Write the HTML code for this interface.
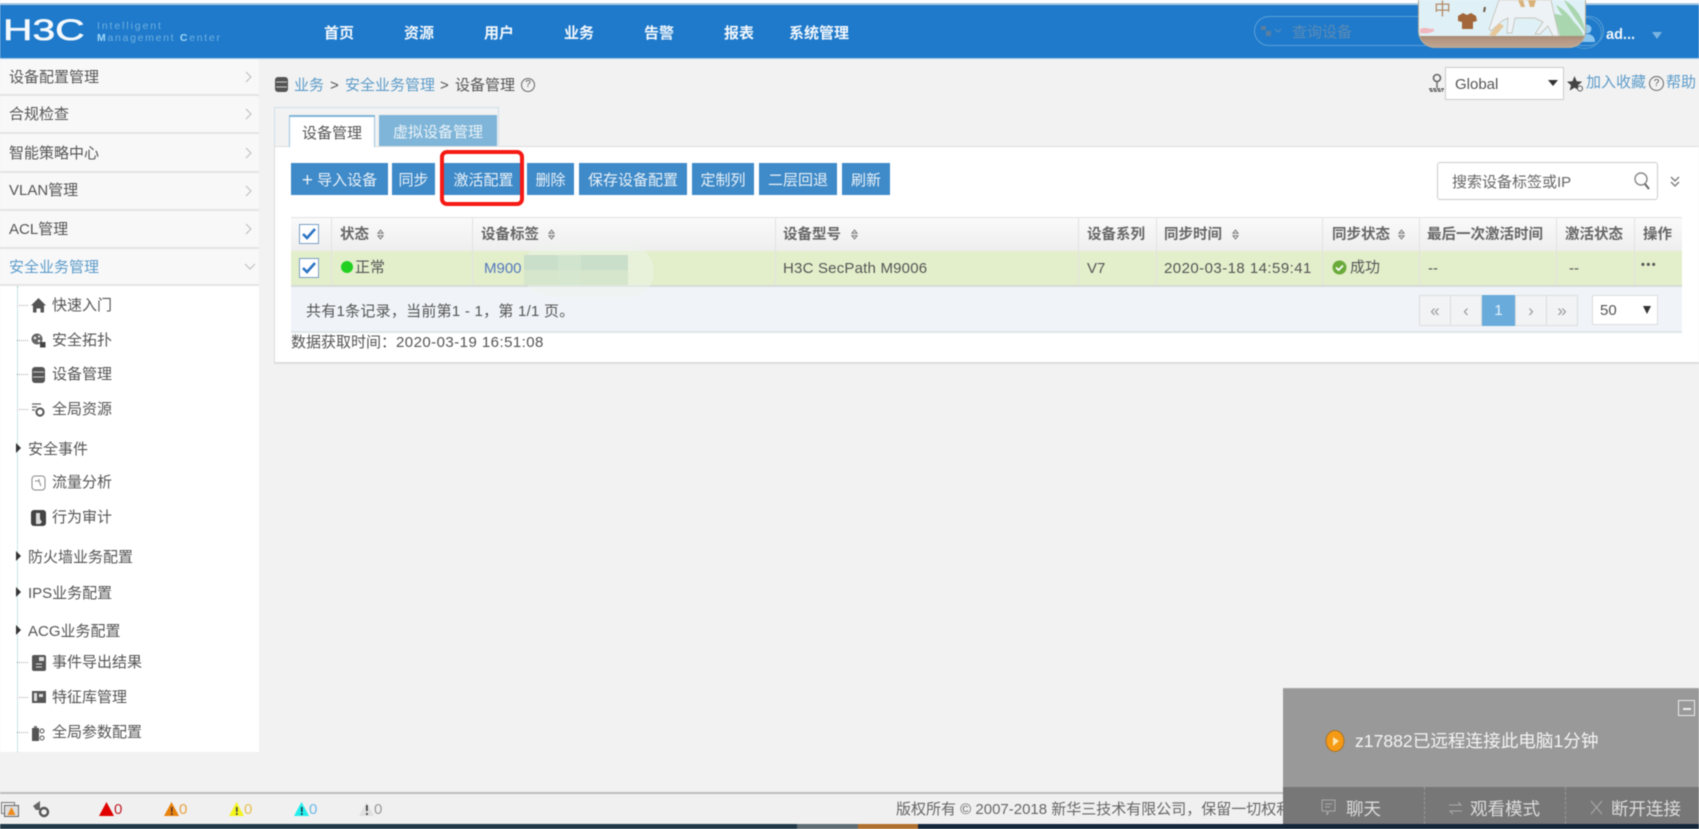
<!DOCTYPE html>
<html lang="zh"><head><meta charset="utf-8"><title>设备管理</title>
<style>
html,body{margin:0;padding:0;width:1699px;height:829px;overflow:hidden;background:#f2f2f2}
#p{position:relative;width:1699px;height:829px;overflow:hidden;font-family:"Liberation Sans","Noto Sans CJK SC",sans-serif;font-size:15px;color:#555;filter:blur(.5px);background:#f2f2f2}
#p div,#p svg{position:absolute}
.t{position:absolute;white-space:nowrap;line-height:20px;height:20px;transform:translateY(1px)}
.n{color:#f2f7fc;font-weight:bold;font-size:15px;top:23px}
.m{left:0;width:259px;background:#f8f8f9;border-bottom:2px solid #e4e4e4;box-sizing:border-box}
.a{color:#5d9cc9}
.b{background:#3f8ac8;color:#e8f1f8;top:163px;height:32px;line-height:35px;text-align:center;position:absolute;white-space:nowrap;font-size:15px}
.h{top:224px;font-weight:bold;color:#666;font-size:14.5px}
.r{top:258px;color:#555}
.pg{top:295px;height:29px;line-height:29px;background:#f1f3f5;border:1px solid #ddd;text-align:center;color:#999;box-sizing:content-box;font-size:17px}
.d{left:17px;width:11px;border-top:1px dotted #aaa;height:0}
.x{width:0;height:0;border-left:5px solid #333;border-top:5px solid transparent;border-bottom:5px solid transparent;left:16px}
.v{top:217px;height:68px;width:1px;background:#e2e2e2}
</style></head><body><div id="p">

<!-- top -->
<div style="left:0;top:0;width:1699px;height:3px;background:#fff"></div>
<div style="left:0;top:3px;width:1699px;height:2px;background:#a9c9e4"></div>
<div style="left:0;top:5px;width:1699px;height:53px;background:#1f7acb"></div>
<div style="left:0;top:58px;width:1699px;height:1px;background:#9cc7e8"></div>

<div class="t" style="left:3px;top:18px;height:26px;line-height:26px;font-size:30px;color:#f3f8fc;transform:scaleX(1.36);transform-origin:left;-webkit-text-stroke:.6px #f3f8fc">H3C</div>
<div class="t" style="left:97px;top:15px;font-size:10.5px;color:#6fb0e0;letter-spacing:1.9px">Intelligent</div>
<div class="t" style="left:97px;top:27px;font-size:10.5px;color:#6fb0e0;letter-spacing:1.7px"><b style="color:#9fd8f8">M</b>anagement <b style="color:#9fd8f8">C</b>enter</div>

<div class="t n" style="left:324px">首页</div>
<div class="t n" style="left:404px">资源</div>
<div class="t n" style="left:484px">用户</div>
<div class="t n" style="left:564px">业务</div>
<div class="t n" style="left:644px">告警</div>
<div class="t n" style="left:724px">报表</div>
<div class="t n" style="left:789px">系统管理</div>

<div style="left:1254px;top:16px;width:350px;height:30px;border:1px solid #5aa0d8;border-radius:16px;box-sizing:border-box"></div>
<svg style="left:1260px;top:24px" width="22" height="14" viewBox="0 0 22 14"><path d="M1 2h5v4H1zM6 7h5v5H6z" fill="#5b7f9e"/><path d="M15 5l3 3 3-3" stroke="#5b8fbe" fill="none"/></svg>
<div class="t" style="left:1292px;top:22px;font-size:15px;color:#5c8bb5">查询设备</div>

<!-- user -->
<div style="left:1567px;top:17px;width:35px;height:32px;border:1px solid #4f9bcf;border-radius:50%;box-sizing:border-box"></div>
<svg style="left:1578px;top:24px" width="18" height="18" viewBox="0 0 18 18"><circle cx="9" cy="5" r="4.5" fill="#8cc6ee"/><path d="M1 18c0-6 4-8 8-8s8 2 8 8z" fill="#8cc6ee"/></svg>
<div class="t" style="left:1606px;top:24px;color:#f0f6fb;font-weight:bold;font-size:14.5px">ad...</div>
<div style="left:1652px;top:32px;width:0;height:0;border-left:5px solid transparent;border-right:5px solid transparent;border-top:7px solid #7ab4e2"></div>

<!-- sticker picture -->
<div style="left:1418px;top:0;width:168px;height:48px;background:#dff1f6;border-radius:0 0 17px 17px;overflow:hidden;border:1px solid #b7a995;border-top:0;box-sizing:border-box">
 <div style="left:0;top:36px;width:168px;height:12px;background:linear-gradient(#a78a74,#b79a85 40%,#c0a792)"></div>
 <div class="t" style="left:15px;top:0;font-size:17px;color:#b58b6b;transform:none">中</div>
 <svg style="left:0;top:0" width="168" height="48" viewBox="0 0 168 48">
  <path d="M39 16l5-3 4 2 4-2 5 3 1 5-4 1v7H43v-7l-4-1z" fill="#a3653a"/>
  <path d="M135 14C150 15 160 25 165 36H141zM145 0C155 5 165 18 166 32 158 20 150 10 145 0zM137 5C147 10 155 20 160 32 150 25 142 15 137 5z" fill="#a9d6ae"/>
  <path d="M80 0H132L140 36H134L129 26 121 34H116L124 22 116 18H96L93 33H88L89 18 83 21 72 31 70 29z" fill="#edf2f6" stroke="#bdb8ab" stroke-width=".7"/>
  <path d="M70 35L80 23 85 26 76 36z" fill="#e6c79b"/>
  <path d="M99 0h5l2 7h-4zM109 0h8l-2 7h-4z" fill="#d9b27a"/>
  <path d="M1 29c4-2 8-1 10 0 3-1 5 0 4 2-3 2-9 3-14 2z" fill="#f2b8c0"/>
  <path d="M66 7l-1 5" stroke="#6d5947" stroke-width="2"/>
 </svg>
</div>

<!-- sidebar -->
<div style="left:0;top:59px;width:259px;height:693px;background:#fff"></div>
<div class="m" style="top:59px;height:37px"></div>
<div class="m" style="top:96px;height:38px"></div>
<div class="m" style="top:134px;height:39px"></div>
<div class="m" style="top:173px;height:38px"></div>
<div class="m" style="top:211px;height:38px"></div>
<div class="m" style="top:249px;height:37px"></div>

<div class="t" style="left:9px;top:67px">设备配置管理</div>
<div class="t" style="left:9px;top:104px">合规检查</div>
<div class="t" style="left:9px;top:143px">智能策略中心</div>
<div class="t" style="left:9px;top:180px">VLAN管理</div>
<div class="t" style="left:9px;top:219px">ACL管理</div>
<div class="t a" style="left:9px;top:257px">安全业务管理</div>
<svg style="left:245px;top:71px" width="8" height="12"><path d="M1 1l5 5-5 5" fill="none" stroke="#bbb"/></svg>
<svg style="left:245px;top:108px" width="8" height="12"><path d="M1 1l5 5-5 5" fill="none" stroke="#bbb"/></svg>
<svg style="left:245px;top:147px" width="8" height="12"><path d="M1 1l5 5-5 5" fill="none" stroke="#bbb"/></svg>
<svg style="left:245px;top:185px" width="8" height="12"><path d="M1 1l5 5-5 5" fill="none" stroke="#bbb"/></svg>
<svg style="left:245px;top:223px" width="8" height="12"><path d="M1 1l5 5-5 5" fill="none" stroke="#bbb"/></svg>
<svg style="left:244px;top:263px" width="12" height="8"><path d="M1 1l5 5 5-5" fill="none" stroke="#bbb"/></svg>

<div style="left:17px;top:286px;height:466px;width:0;border-left:1px dotted #9cc;"></div>
<div class="d" style="top:305px"></div><div class="d" style="top:340px"></div><div class="d" style="top:374px"></div><div class="d" style="top:409px"></div>
<div class="d" style="top:662px"></div><div class="d" style="top:697px"></div><div class="d" style="top:732px"></div>

<svg style="left:31px;top:298px" width="15" height="15" viewBox="0 0 15 15"><path d="M7.5 0L15 7.5h-2v7H9.500v-4h-4v4H2v-7H0z" fill="#555"/></svg>
<svg style="left:31px;top:333px" width="15" height="15" viewBox="0 0 15 15"><circle cx="6" cy="6" r="5.500" fill="#666"/><circle cx="4" cy="5" r="1.200" fill="#fff"/><circle cx="8" cy="3.500" r="1" fill="#fff"/><circle cx="8" cy="8" r="1.200" fill="#fff"/><rect x="9" y="9" width="5.500" height="5.500" fill="#444"/></svg>
<svg style="left:32px;top:367px" width="13" height="16" viewBox="0 0 13 16"><rect x="0" y="0" width="13" height="16" rx="3" fill="#555"/><path d="M1 5h11M1 10h11" stroke="#ccc"/></svg>
<svg style="left:31px;top:403px" width="15" height="14" viewBox="0 0 15 14"><path d="M1 1h9M1 4h5M1 7h3" stroke="#666" stroke-width="1.300"/><circle cx="9" cy="9" r="3.600" fill="none" stroke="#555" stroke-width="2"/></svg>
<svg style="left:31px;top:475px" width="15" height="16" viewBox="0 0 15 16"><rect x="1" y="1" width="13" height="14" rx="3" fill="none" stroke="#888"/><path d="M4 6h4l2 5M8 6V4" stroke="#888" fill="none"/></svg>
<svg style="left:31px;top:510px" width="15" height="16" viewBox="0 0 15 16"><rect x="0" y="0" width="15" height="16" rx="3" fill="#444"/><path d="M5 3h4v6l2 3-2 2H5z" fill="#ddd"/></svg>
<svg style="left:32px;top:655px" width="14" height="16" viewBox="0 0 14 16"><rect width="14" height="16" rx="2" fill="#555"/><rect x="7" y="2" width="5" height="4" fill="#ddd"/><path d="M4 9h6M4 12h6" stroke="#ddd"/></svg>
<svg style="left:32px;top:691px" width="14" height="12" viewBox="0 0 14 12"><rect width="14" height="12" fill="#555"/><path d="M2 2h3v8H2zM7 3h4v3H7z" fill="#ddd"/></svg>
<svg style="left:31px;top:725px" width="15" height="16" viewBox="0 0 15 16"><path d="M1 3h7v13H1z" fill="#555"/><path d="M3 1h3v2H3z" fill="#777"/><circle cx="11" cy="6" r="2" fill="none" stroke="#555"/><circle cx="11" cy="13" r="2" fill="none" stroke="#555"/></svg>

<div class="t" style="left:52px;top:295px">快速入门</div>
<div class="t" style="left:52px;top:330px">安全拓扑</div>
<div class="t" style="left:52px;top:364px">设备管理</div>
<div class="t" style="left:52px;top:399px">全局资源</div>
<div class="t" style="left:28px;top:439px">安全事件</div>
<div class="t" style="left:52px;top:472px">流量分析</div>
<div class="t" style="left:52px;top:507px">行为审计</div>
<div class="t" style="left:28px;top:547px">防火墙业务配置</div>
<div class="t" style="left:28px;top:583px">IPS业务配置</div>
<div class="t" style="left:28px;top:621px">ACG业务配置</div>
<div class="t" style="left:52px;top:652px">事件导出结果</div>
<div class="t" style="left:52px;top:687px">特征库管理</div>
<div class="t" style="left:52px;top:722px">全局参数配置</div>
<div class="x" style="top:443px"></div><div class="x" style="top:551px"></div><div class="x" style="top:587px"></div><div class="x" style="top:625px"></div>

<!-- breadcrumb -->
<svg style="left:275px;top:77px" width="13" height="15" viewBox="0 0 13 15"><rect width="13" height="15" rx="3" fill="#555"/><path d="M1 5h11M1 10h11" stroke="#ccc"/></svg>
<div class="t a" style="left:294px;top:75px">业务</div>
<div class="t" style="left:330px;top:75px">&gt;</div>
<div class="t a" style="left:345px;top:75px">安全业务管理</div>
<div class="t" style="left:440px;top:75px">&gt;</div>
<div class="t" style="left:455px;top:75px">设备管理</div>
<div style="left:521px;top:78px;width:14px;height:14px;border:1px solid #666;border-radius:50%;box-sizing:border-box;font-size:10px;line-height:12px;text-align:center">?</div>

<svg style="left:1428px;top:73px" width="17" height="20" viewBox="0 0 17 20"><circle cx="9" cy="5" r="3.500" fill="none" stroke="#666" stroke-width="1.600"/><path d="M9 9v6" stroke="#666" stroke-width="1.400"/><path d="M1 16h15M2 18h13" stroke="#555" stroke-width="1.500" stroke-dasharray="3 1"/></svg>
<div style="left:1445px;top:67px;width:119px;height:33px;background:#fff;border:1px solid #ccc;box-sizing:border-box"></div>
<div class="t" style="left:1455px;top:74px;color:#555">Global</div>
<div style="left:1548px;top:80px;width:0;height:0;border-left:5px solid transparent;border-right:5px solid transparent;border-top:6px solid #333"></div>
<svg style="left:1567px;top:76px" width="17" height="16" viewBox="0 0 17 16"><path d="M7.500 0l2.200 5.200 5.500.4-4.200 3.600 1.300 5.400-4.800-3-4.800 3 1.300-5.400L0 5.600l5.500-.4z" fill="#444"/><circle cx="13" cy="12.500" r="2.500" fill="#f2f2f2" stroke="#555"/></svg>
<div class="t a" style="left:1586px;top:72px">加入收藏</div>
<div style="left:1649px;top:76px;width:15px;height:15px;border:1px solid #666;border-radius:50%;box-sizing:border-box;font-size:10px;line-height:13px;text-align:center">?</div>
<div class="t a" style="left:1666px;top:72px">帮助</div>

<!-- tabs -->
<div style="left:274px;top:107px;width:225px;height:40px;border:1px solid #cfdfea;border-bottom:0;box-sizing:border-box"></div>
<div style="left:274px;top:146px;width:1426px;height:218px;background:#fff;border:1px solid #ddd;border-right:0;border-bottom:2px solid #ddd;box-sizing:border-box"></div>
<div style="left:289px;top:115px;width:86px;height:32px;background:#fff;border:1px solid #9cc5e2;border-top:2px solid #7fb5d8;border-bottom:0;box-sizing:border-box;text-align:center;line-height:34px;color:#555;white-space:nowrap">设备管理</div>
<div style="left:379px;top:115px;width:118px;height:31px;background:#7fb5d8;text-align:center;line-height:35px;color:#eaf3f9;white-space:nowrap">虚拟设备管理</div>

<!-- buttons -->
<div class="b" style="left:291px;width:97px"><span style="font-size:19px;font-weight:300;vertical-align:-1px">+</span> 导入设备</div>
<div class="b" style="left:392px;width:43px">同步</div>
<div class="b" style="left:444px;width:79px">激活配置</div>
<div class="b" style="left:527px;width:47px">删除</div>
<div class="b" style="left:579px;width:108px">保存设备配置</div>
<div class="b" style="left:692px;width:62px">定制列</div>
<div class="b" style="left:759px;width:78px">二层回退</div>
<div class="b" style="left:842px;width:48px">刷新</div>
<div style="left:440px;top:150px;width:84px;height:56px;border:4px solid #f51a14;border-radius:7px;box-sizing:border-box"></div>

<!-- search -->
<div style="left:1437px;top:162px;width:221px;height:38px;background:#fff;border:1px solid #ccc;border-radius:3px;box-sizing:border-box"></div>
<div class="t" style="left:1452px;top:172px;color:#666">搜索设备标签或IP</div>
<svg style="left:1633px;top:171px" width="18" height="20" viewBox="0 0 18 20"><circle cx="8" cy="8" r="6" fill="none" stroke="#888" stroke-width="1.400"/><path d="M12 13l4 5" stroke="#666" stroke-width="2"/></svg>
<svg style="left:1669px;top:175px" width="12" height="13" viewBox="0 0 12 13"><path d="M2 2l4 4 4-4M2 7l4 4 4-4" fill="none" stroke="#777" stroke-width="1.300"/></svg>

<!-- table -->
<div style="left:291px;top:217px;width:1391px;height:34px;background:linear-gradient(#fafafa,#eeeeee);border-top:1px solid #e2e2e2;box-sizing:border-box"></div>
<div style="left:291px;top:251px;width:1391px;height:34px;background:#e3efcb"></div>
<div style="left:291px;top:285px;width:1391px;height:48px;background:#f0f4f8;border-top:2px solid #d5dcd8;border-bottom:2px solid #e0e6ea;box-sizing:border-box"></div>
<div class="v" style="left:331px"></div><div class="v" style="left:472px"></div><div class="v" style="left:775px"></div><div class="v" style="left:1078px"></div><div class="v" style="left:1156px"></div><div class="v" style="left:1322px"></div><div class="v" style="left:1419px"></div><div class="v" style="left:1556px"></div><div class="v" style="left:1634px"></div>

<svg style="left:299px;top:224px" width="20" height="20" viewBox="0 0 20 20"><rect x=".5" y=".5" width="19" height="19" fill="#fff" stroke="#7a9fc4"/><path d="M4 10l4 4 8-9" fill="none" stroke="#2c74c4" stroke-width="2.600"/></svg>
<svg style="left:299px;top:258px" width="20" height="20" viewBox="0 0 20 20"><rect x=".5" y=".5" width="19" height="19" fill="#fff" stroke="#7a9fc4"/><path d="M4 10l4 4 8-9" fill="none" stroke="#2c74c4" stroke-width="2.600"/></svg>

<div class="t h" style="left:340px">状态</div>
<div class="t h" style="left:481px">设备标签</div>
<div class="t h" style="left:783px">设备型号</div>
<div class="t h" style="left:1087px">设备系列</div>
<div class="t h" style="left:1164px">同步时间</div>
<div class="t h" style="left:1332px">同步状态</div>
<div class="t h" style="left:1427px">最后一次激活时间</div>
<div class="t h" style="left:1565px">激活状态</div>
<div class="t h" style="left:1643px">操作</div>
<svg style="left:377px;top:229px" width="7" height="11" viewBox="0 0 7 11"><path d="M1 4.200L3.500 1 6 4.200zM1 6.800L3.500 10 6 6.800z" fill="none" stroke="#777"/></svg>
<svg style="left:548px;top:229px" width="7" height="11" viewBox="0 0 7 11"><path d="M1 4.200L3.500 1 6 4.200zM1 6.800L3.500 10 6 6.800z" fill="none" stroke="#777"/></svg>
<svg style="left:851px;top:229px" width="7" height="11" viewBox="0 0 7 11"><path d="M1 4.200L3.500 1 6 4.200zM1 6.800L3.500 10 6 6.800z" fill="none" stroke="#777"/></svg>
<svg style="left:1232px;top:229px" width="7" height="11" viewBox="0 0 7 11"><path d="M1 4.200L3.500 1 6 4.200zM1 6.800L3.500 10 6 6.800z" fill="none" stroke="#777"/></svg>
<svg style="left:1398px;top:229px" width="7" height="11" viewBox="0 0 7 11"><path d="M1 4.200L3.500 1 6 4.200zM1 6.800L3.500 10 6 6.800z" fill="none" stroke="#777"/></svg>

<div style="left:341px;top:261px;width:12px;height:12px;border-radius:50%;background:#22d022"></div>
<div class="t r" style="left:355px;top:257px">正常</div>
<div class="t r" style="left:484px;color:#5577bb">M900</div>

<!-- smudge -->
<div style="left:524px;top:243px;width:130px;height:54px;border-radius:50px 60px 50px 50px;background:rgba(238,245,238,.45)"></div>
<div style="left:524px;top:255px;width:104px;height:15px;background:#c9dfca"></div>
<div style="left:524px;top:270px;width:104px;height:15px;background:#d5e6cc"></div>
<div style="left:558px;top:255px;width:23px;height:30px;background:rgba(215,232,208,.6)"></div>

<div class="t r" style="left:783px;letter-spacing:.2px">H3C SecPath M9006</div>
<div class="t r" style="left:1087px">V7</div>
<div class="t r" style="left:1164px;font-size:15px;letter-spacing:.45px">2020-03-18 14:59:41</div>
<svg style="left:1332px;top:260px" width="15" height="15" viewBox="0 0 15 15"><circle cx="7.500" cy="7.500" r="7" fill="#6aaa3a"/><path d="M4 7.500l2.600 2.600L11 5.500" fill="none" stroke="#fff" stroke-width="1.800"/></svg>
<div class="t r" style="left:1350px;top:257px">成功</div>
<div class="t r" style="left:1428px">--</div>
<div class="t r" style="left:1569px">--</div>
<div class="t" style="left:1641px;top:254px;font-weight:bold;font-size:11px;letter-spacing:1.500px;color:#555">•••</div>

<div class="t" style="left:306px;top:301px;letter-spacing:.25px">共有1条记录，当前第1 - 1，第 1/1 页。</div>
<div class="t" style="left:291px;top:332px">数据获取时间：<span style="letter-spacing:.45px">2020-03-19 16:51:08</span></div>

<div class="pg" style="left:1419px;width:30px">«</div>
<div class="pg" style="left:1450px;width:30px">‹</div>
<div style="left:1482px;top:295px;width:33px;height:31px;background:#69acdc;color:#e6f2fb;text-align:center;line-height:31px;font-size:15px">1</div>
<div class="pg" style="left:1515px;width:30px">›</div>
<div class="pg" style="left:1546px;width:30px">»</div>
<div style="left:1592px;top:295px;width:66px;height:30px;background:#fff;border:1px solid #ddd;box-sizing:border-box;line-height:30px;padding-left:7px;color:#555">50</div>
<div style="left:1643px;top:306px;width:0;height:0;border-left:4px solid transparent;border-right:4px solid transparent;border-top:8px solid #333"></div>

<!-- footer -->
<div style="left:0;top:792px;width:1699px;height:2px;background:#bdbdbd"></div>
<div style="left:0;top:794px;width:1699px;height:30px;background:#f0f0f0"></div>
<div style="left:0;top:824px;width:1699px;height:5px;background:#1f3a46"></div>
<div style="left:797px;top:824px;width:61px;height:5px;background:#5d6b72"></div>
<div style="left:858px;top:824px;width:60px;height:5px;background:#b0702e"></div>
<div style="left:918px;top:824px;width:781px;height:5px;background:#13263c"></div>

<svg style="left:1px;top:802px" width="18" height="15" viewBox="0 0 18 15"><rect x=".5" y=".5" width="13" height="11" fill="none" stroke="#777"/><rect x="3.500" y="3.500" width="14" height="11" fill="#ddd" stroke="#666"/><path d="M10.500 5l4 8h-8z" fill="#ee8a1c"/></svg>
<svg style="left:32px;top:801px" width="18" height="17" viewBox="0 0 18 17"><path d="M1 5l7-5v9H4z" fill="#666"/><circle cx="12" cy="11" r="4" fill="none" stroke="#555" stroke-width="2.400"/></svg>

<svg style="left:99px;top:802px" width="15" height="14"><path d="M7.500 0L15 14H0z" fill="#e00000"/></svg>
<div class="t" style="left:114px;top:799px;color:#c0202a">0</div>
<svg style="left:164px;top:802px" width="15" height="14"><path d="M7.500 0L15 14H0z" fill="#e8820c"/><path d="M7 5h1.600v5H7zM7 11h1.600v2H7z" fill="#533"/></svg>
<div class="t" style="left:179px;top:799px;color:#e8a040">0</div>
<svg style="left:229px;top:802px" width="15" height="14"><path d="M7.500 0L15 14H0z" fill="#f5f51c"/><path d="M7 5h1.600v5H7zM7 11h1.600v2H7z" fill="#444"/></svg>
<div class="t" style="left:244px;top:799px;color:#e8c050">0</div>
<svg style="left:294px;top:802px" width="15" height="14"><path d="M7.500 0L15 14H0z" fill="#22eeee"/><path d="M7 5h1.600v5H7zM7 11h1.600v2H7z" fill="#234"/></svg>
<div class="t" style="left:309px;top:799px;color:#6ab8e8">0</div>
<svg style="left:359px;top:802px" width="15" height="14"><path d="M7.500 0L15 14H0z" fill="#e0e0e0"/><path d="M7 3h1.800v6H7zM7 11h1.800v2H7z" fill="#444"/></svg>
<div class="t" style="left:374px;top:799px;color:#999">0</div>

<div class="t" style="left:896px;top:799px;font-size:15px;width:387px;overflow:hidden;color:#666">版权所有 © 2007-2018 新华三技术有限公司，保留一切权利</div>

<!-- popup -->
<div style="left:1283px;top:688px;width:416px;height:136px;background:#999;border-top:1px solid #a8a8a8;box-sizing:border-box"></div>
<div style="left:1283px;top:787px;width:416px;height:37px;background:#777"></div>
<div style="left:1424px;top:787px;width:0;height:37px;border-left:1px dashed #999"></div>
<div style="left:1565px;top:787px;width:0;height:37px;border-left:1px dashed #999"></div>
<div style="left:1678px;top:700px;width:17px;height:16px;border:1px solid #e8e8e8;box-sizing:border-box"></div>
<div style="left:1683px;top:708px;width:8px;height:2px;background:#eee"></div>
<svg style="left:1325px;top:730px" width="20" height="22" viewBox="0 0 20 22"><ellipse cx="10" cy="11" rx="9" ry="10.500" fill="#f59a14" stroke="#a9712a"/><path d="M8 7l6 4-6 5z" fill="#fde6b0"/></svg>
<div class="t" style="left:1355px;top:730px;color:#f4f4f4;font-size:17.6px">z17882已远程连接此电脑1分钟</div>

<svg style="left:1321px;top:799px" width="15" height="18" viewBox="0 0 15 18"><path d="M1 1h13v11H8l-2 4v-4H1z" fill="none" stroke="#aaa"/><path d="M4 5h7M4 8h5" stroke="#aaa"/></svg>
<div class="t" style="left:1346px;top:798px;color:#dcdcdc;font-size:17.500px">聊天</div>
<svg style="left:1448px;top:801px" width="15" height="14" viewBox="0 0 15 14"><path d="M1 4h12l-3-3M14 10H2l3 3" fill="none" stroke="#aaa"/></svg>
<div class="t" style="left:1470px;top:798px;color:#dcdcdc;font-size:17.500px">观看模式</div>
<svg style="left:1590px;top:800px" width="13" height="15"><path d="M1 1l11 13M12 1L1 14" stroke="#aaa"/></svg>
<div class="t" style="left:1611px;top:798px;color:#dcdcdc;font-size:17.500px">断开连接</div>

</div></body></html>
